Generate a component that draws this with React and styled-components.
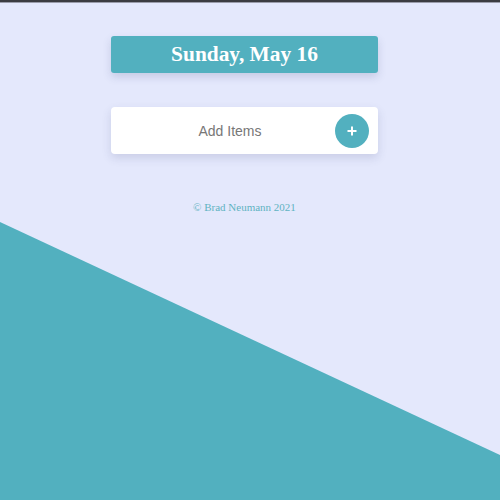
import React from 'react';
import styled, { createGlobalStyle } from 'styled-components';

const GlobalStyle = createGlobalStyle`
  html, body {
    margin: 0;
    padding: 0;
    background: #e4e8fc;
    height: 100%;
    overflow: hidden;
  }
  #root {
    min-height: 100%;
  }
`;

const TopBar = styled.div`
  height: 2px;
  background: #3b3c42;
  border-bottom: 1px solid #9a9cab;
`;

const Slope = styled.div`
  position: fixed;
  inset: 0;
  background: #52b0bf;
  clip-path: polygon(0 222px, 100% 455px, 100% 100%, 0 100%);
  z-index: 0;
`;

const Page = styled.main`
  position: relative;
  z-index: 1;
  display: flex;
  flex-direction: column;
  align-items: center;
  padding-top: 33px;
  padding-right: 11px;
`;

const DateBanner = styled.h1`
  margin: 0;
  width: 267px;
  height: 37px;
  display: flex;
  align-items: center;
  justify-content: center;
  background: #52b0bf;
  border-radius: 3px;
  box-shadow: 0 4px 8px rgba(60, 70, 120, 0.18);
  color: #fff;
  font-family: "Liberation Serif", "Times New Roman", serif;
  font-weight: bold;
  font-size: 21.4px;
`;

const AddCard = styled.form`
  margin-top: 34px;
  width: 267px;
  height: 47px;
  box-sizing: border-box;
  display: flex;
  align-items: center;
  background: #fff;
  border-radius: 4px;
  box-shadow: 0 4px 10px rgba(60, 70, 120, 0.16);
  padding-right: 9px;
`;

const ItemInput = styled.input`
  flex: 1;
  min-width: 0;
  border: none;
  outline: none;
  background: transparent;
  padding: 0 0 0 14px;
  text-align: center;
  font-family: "Liberation Sans", Arial, sans-serif;
  font-size: 14px;
  color: #555;
  &::placeholder {
    color: #777;
  }
`;

const AddButton = styled.button`
  width: 34px;
  height: 34px;
  border-radius: 50%;
  border: none;
  background: #52b0bf;
  color: #fff;
  display: flex;
  align-items: center;
  justify-content: center;
  padding: 0;
  cursor: pointer;
`;

const Footer = styled.footer`
  margin-top: 47px;
  font-family: "Liberation Serif", "Times New Roman", serif;
  font-size: 11px;
  color: #5fb3c2;
`;

export default function App() {
  return (
    <>
      <GlobalStyle />
      <TopBar />
      <Slope />
      <Page>
        <DateBanner>Sunday, May 16</DateBanner>
        <AddCard onSubmit={(e) => e.preventDefault()}>
          <ItemInput placeholder="Add Items" />
          <AddButton type="submit" aria-label="add">
            <svg width="10" height="10" viewBox="0 0 10 10">
              <path d="M5 0.5v9M0.5 5h9" stroke="#fff" strokeWidth="2" />
            </svg>
          </AddButton>
        </AddCard>
        <Footer>© Brad Neumann 2021</Footer>
      </Page>
    </>
  );
}
